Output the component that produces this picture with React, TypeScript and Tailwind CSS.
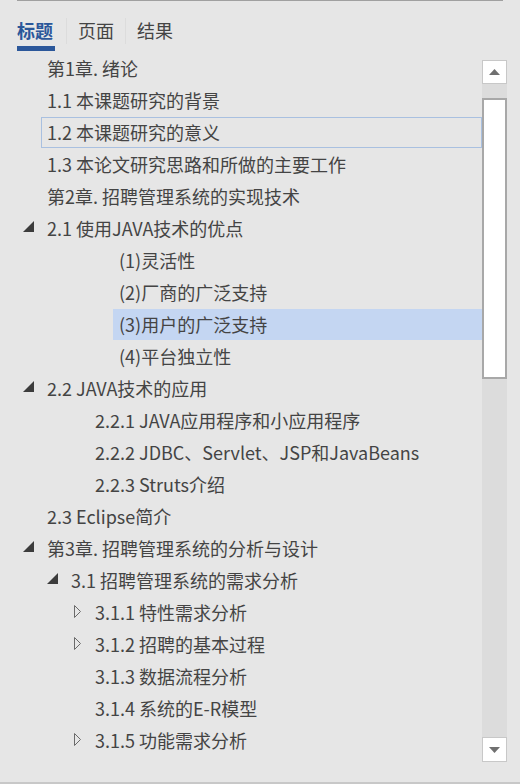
import React from 'react';

type Node = {
  label: string;
  level: number;
  icon?: 'open' | 'closed';
  state?: 'hover' | 'selected';
};

const rows: Node[] = [
  { label: '第1章. 绪论', level: 0 },
  { label: '1.1 本课题研究的背景', level: 0 },
  { label: '1.2 本课题研究的意义', level: 0, state: 'hover' },
  { label: '1.3 本论文研究思路和所做的主要工作', level: 0 },
  { label: '第2章. 招聘管理系统的实现技术', level: 0 },
  { label: '2.1 使用JAVA技术的优点', level: 0, icon: 'open' },
  { label: '(1)灵活性', level: 3 },
  { label: '(2)厂商的广泛支持', level: 3 },
  { label: '(3)用户的广泛支持', level: 3, state: 'selected' },
  { label: '(4)平台独立性', level: 3 },
  { label: '2.2 JAVA技术的应用', level: 0, icon: 'open' },
  { label: '2.2.1 JAVA应用程序和小应用程序', level: 2 },
  { label: '2.2.2 JDBC、Servlet、JSP和JavaBeans', level: 2 },
  { label: '2.2.3 Struts介绍', level: 2 },
  { label: '2.3 Eclipse简介', level: 0 },
  { label: '第3章. 招聘管理系统的分析与设计', level: 0, icon: 'open' },
  { label: '3.1 招聘管理系统的需求分析', level: 1, icon: 'open' },
  { label: '3.1.1 特性需求分析', level: 2, icon: 'closed' },
  { label: '3.1.2 招聘的基本过程', level: 2, icon: 'closed' },
  { label: '3.1.3 数据流程分析', level: 2 },
  { label: '3.1.4 系统的E-R模型', level: 2 },
  { label: '3.1.5 功能需求分析', level: 2, icon: 'closed' },
];

const indent = ['pl-[23px]', 'pl-[47px]', 'pl-[71px]', 'pl-[95px]'];

function Toggle({ kind }: { kind?: 'open' | 'closed' }) {
  if (kind === 'open') {
    return (
      <svg width="11" height="11" viewBox="0 0 11 11" className="-mt-[3px]">
        <polygon points="11,0 11,11 0,11" fill="#3c3c3c" />
      </svg>
    );
  }
  if (kind === 'closed') {
    return (
      <svg width="11" height="13" viewBox="0 0 11 13" className="ml-[3px] -mt-[2px]">
        <polygon points="0.5,0.5 6.5,6.5 0.5,12.5" fill="none" stroke="#6a6a6a" strokeWidth="1" />
      </svg>
    );
  }
  return null;
}

export default function App() {
  return (
    <div
      className="w-[520px] h-[784px] bg-[#e6e6e6] text-[#444] overflow-hidden flex flex-col border-b-2 border-[#c8c8c8]"
      style={{ fontFamily: '"Microsoft YaHei", "Noto Sans CJK SC", sans-serif' }}
    >
      {/* top rule */}
      <div className="ml-[17px] w-[486px] h-px bg-[#a0a0a0]" />

      {/* tabs */}
      <div className="flex pl-[17px] h-[51px] pt-[13px] text-[18px]">
        <div className="flex flex-col">
          <span className="font-bold text-[#2b579a] leading-[32px]">标题</span>
          <span className="h-[5px] bg-[#2b579a] w-[38px]" />
        </div>
        <span className="w-px h-[26px] mt-[4px] bg-[#dcdcdc] mx-[11px]" />
        <span className="leading-[32px]">页面</span>
        <span className="w-px h-[26px] mt-[4px] bg-[#dcdcdc] mx-[11px]" />
        <span className="leading-[32px]">结果</span>
      </div>

      <div className="flex flex-1">
        {/* tree */}
        <div className="w-[482px] flex flex-col">
          {rows.map((r, i) => (
            <div key={i} className={`flex items-center h-[32px] ${indent[r.level]}`}>
              <span className="w-[18px] flex items-center shrink-0">
                <Toggle kind={r.icon} />
              </span>
              <span
                className={`flex-1 h-[31px] flex items-center pl-[5px] text-[18px] whitespace-nowrap border ${
                  r.state === 'hover'
                    ? 'border-[#a9c0e0]'
                    : r.state === 'selected'
                    ? 'border-transparent bg-[#c4d6f2]'
                    : 'border-transparent'
                }`}
              >
                {r.label}
              </span>
            </div>
          ))}
        </div>

        {/* scrollbar */}
        <div className="w-[25px] mt-[8px] h-[702px] flex flex-col bg-[#dcdcdc]">
          <div className="h-[24px] bg-white border border-[#c8c8c8] flex items-center justify-center">
            <svg width="11" height="6" viewBox="0 0 11 6">
              <polygon points="5.5,0 11,6 0,6" fill="#707070" />
            </svg>
          </div>
          <div className="h-[14px]" />
          <div className="h-[281px] bg-white border-2 border-[#a8a8a8]" />
          <div className="flex-1" />
          <div className="h-[25px] bg-white border border-[#c8c8c8] flex items-center justify-center">
            <svg width="11" height="6" viewBox="0 0 11 6">
              <polygon points="0,0 11,0 5.5,6" fill="#707070" />
            </svg>
          </div>
        </div>
      </div>
    </div>
  );
}
